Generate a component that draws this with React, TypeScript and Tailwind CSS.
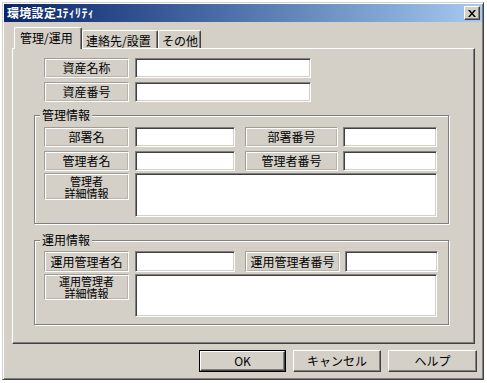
import React from "react";

function Label({ className = "", children }: { className?: string; children: React.ReactNode }) {
  return (
    <div
      className={
        "flex shrink-0 flex-col items-center justify-center bg-[#d4d0c8] border border-t-[#a09d96] border-l-[#a09d96] border-r-white border-b-white shadow-[inset_1px_1px_0_#ffffff,inset_-1px_-1px_0_#b8b4ac] text-[12px] leading-[14px] text-black " +
        className
      }
    >
      {children}
    </div>
  );
}

function Field({ className = "" }: { className?: string }) {
  return (
    <div
      className={
        "shrink-0 bg-white border border-t-[#808080] border-l-[#808080] border-r-white border-b-white shadow-[inset_1px_1px_0_#404040,inset_-1px_-1px_0_#d4d0c8] " +
        className
      }
    />
  );
}

function Btn({ children, className = "" }: { children: React.ReactNode; className?: string }) {
  return (
    <div
      className={
        "flex shrink-0 items-center justify-center h-[22px] bg-[#d4d0c8] border border-t-white border-l-white border-r-[#404040] border-b-[#404040] shadow-[inset_-1px_-1px_0_#808080] text-[12px] text-black " +
        className
      }
    >
      {children}
    </div>
  );
}

export default function App() {
  return (
    <div className="w-[487px] h-[383px] bg-white pt-[2px] pl-[2px] font-['Noto_Sans_CJK_JP',sans-serif] overflow-hidden">
      <div className="w-[482px] h-[378px] flex flex-col bg-[#d4d0c8] border border-t-[#d4d0c8] border-l-[#d4d0c8] border-r-[#404040] border-b-[#404040] shadow-[inset_1px_1px_0_#ffffff,inset_-1px_-1px_0_#808080] p-[1px]">
        {/* title bar */}
        <div className="h-[18px] flex items-center justify-between bg-linear-to-r from-[#0a246a] to-[#a6caf0] pl-[3px] pr-[2px]">
          <span className="text-[12px] font-bold text-white leading-[14px] tracking-[0.3px]">環境設定ﾕﾃｨﾘﾃｨ</span>
          <div className="w-[16px] h-[14px] flex items-center justify-center bg-[#d4d0c8] border border-t-white border-l-white border-r-[#404040] border-b-[#404040] shadow-[inset_-1px_-1px_0_#808080]">
            <svg width="8" height="7" viewBox="0 0 8 7">
              <path d="M0 0 L2 0 L4 2.5 L6 0 L8 0 L5 3.5 L8 7 L6 7 L4 4.5 L2 7 L0 7 L3 3.5 Z" fill="#000" />
            </svg>
          </div>
        </div>

        {/* tabs */}
        <div className="h-[26px] flex items-end pl-[10px]">
          <div className="relative z-10 -mb-[1px] h-[22px] w-[68px] bg-[#d4d0c8] border-t border-l border-r border-t-white border-l-white border-r-[#404040] shadow-[inset_-1px_0_0_#808080] rounded-t-[2px] pl-[5px] pt-[3px] text-[12px] leading-[14px] text-black">
            管理/運用
          </div>
          <div className="h-[18px] w-[76px] bg-[#d4d0c8] border-t border-l border-r border-t-white border-l-white border-r-[#404040] shadow-[inset_-1px_0_0_#808080] rounded-t-[2px] pl-[3px] pt-[3px] text-[12px] leading-[14px] text-black">
            連絡先/設置
          </div>
          <div className="h-[18px] w-[43px] bg-[#d4d0c8] border-t border-l border-r border-t-white border-l-white border-r-[#404040] shadow-[inset_-1px_0_0_#808080] rounded-t-[2px] pl-[3px] pt-[3px] text-[12px] leading-[14px] text-black">
            その他
          </div>
        </div>

        {/* panel */}
        <div className="ml-[8px] w-[463px] h-[296px] border border-t-white border-l-white border-r-[#404040] border-b-[#404040] shadow-[inset_-1px_-1px_0_#808080] pt-[9px] pl-[21px]">
          <div className="ml-[10px] flex gap-[6px]">
            <Label className="w-[85px] h-[20px]">資産名称</Label>
            <Field className="w-[176px] h-[20px]" />
          </div>
          <div className="ml-[10px] mt-[4px] flex gap-[6px]">
            <Label className="w-[85px] h-[20px]">資産番号</Label>
            <Field className="w-[176px] h-[20px]" />
          </div>

          <fieldset className="mt-[6px] w-[415px] border border-[#808080] shadow-[inset_1px_1px_0_#ffffff,1px_1px_0_#ffffff] pl-[9px] pt-[5px] pb-[6px]">
            <legend className="-ml-[4px] px-[2px] bg-[#d4d0c8] text-[12px] leading-[14px] text-black">管理情報</legend>
            <div className="flex">
              <Label className="w-[85px] h-[20px]">部署名</Label>
              <Field className="ml-[6px] w-[100px] h-[20px]" />
              <Label className="ml-[10px] w-[93px] h-[20px]">部署番号</Label>
              <Field className="ml-[5px] w-[94px] h-[20px]" />
            </div>
            <div className="flex mt-[4px]">
              <Label className="w-[85px] h-[20px]">管理者名</Label>
              <Field className="ml-[6px] w-[100px] h-[20px]" />
              <Label className="ml-[10px] w-[93px] h-[20px]">管理者番号</Label>
              <Field className="ml-[5px] w-[94px] h-[20px]" />
            </div>
            <div className="flex items-start mt-[2px]">
              <Label className="w-[85px] h-[27px]">
                <span className="text-center text-[11px] leading-[12px]">
                  管理者
                  <br />
                  詳細情報
                </span>
              </Label>
              <Field className="ml-[6px] w-[302px] h-[44px]" />
            </div>
          </fieldset>

          <fieldset className="mt-[9px] w-[415px] border border-[#808080] shadow-[inset_1px_1px_0_#ffffff,1px_1px_0_#ffffff] pl-[9px] pt-[4px] pb-[7px]">
            <legend className="-ml-[4px] px-[2px] bg-[#d4d0c8] text-[12px] leading-[14px] text-black">運用情報</legend>
            <div className="flex">
              <Label className="w-[85px] h-[21px]">運用管理者名</Label>
              <Field className="ml-[6px] w-[100px] h-[21px]" />
              <Label className="ml-[10px] w-[95px] h-[21px]">運用管理者番号</Label>
              <Field className="ml-[5px] w-[93px] h-[21px]" />
            </div>
            <div className="flex items-start mt-[2px]">
              <Label className="w-[85px] h-[26px]">
                <span className="text-center text-[11px] leading-[12px]">
                  運用管理者
                  <br />
                  詳細情報
                </span>
              </Label>
              <Field className="ml-[6px] w-[302px] h-[43px]" />
            </div>
          </fieldset>
        </div>

        {/* buttons */}
        <div className="mt-[6px] flex justify-end gap-[7px] pr-[5px]">
          <div className="w-[87px] h-[22px] border border-black">
            <Btn className="w-full h-full">OK</Btn>
          </div>
          <Btn className="w-[88px]">キャンセル</Btn>
          <Btn className="w-[89px]">ヘルプ</Btn>
        </div>
      </div>
    </div>
  );
}
